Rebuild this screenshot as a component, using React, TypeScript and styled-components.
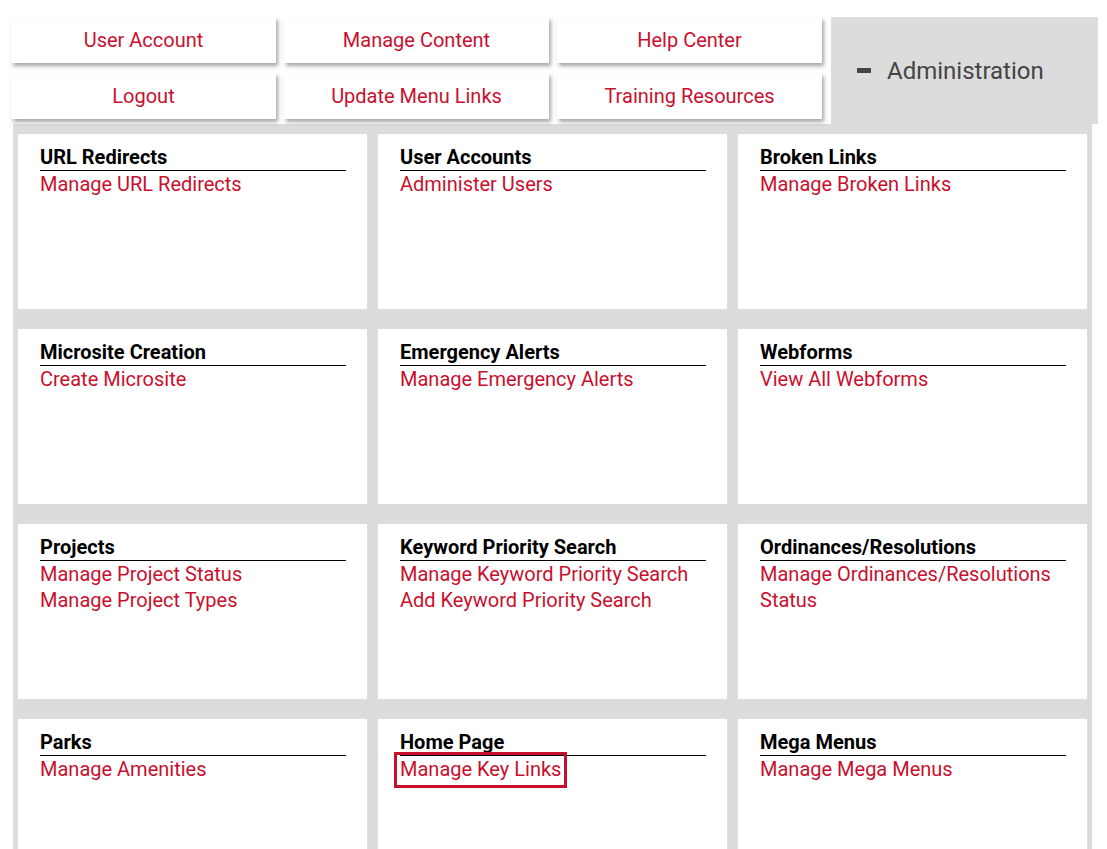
import * as React from "react";
import styled, { createGlobalStyle } from "styled-components";

interface ILinkItem {
  label: string;
  highlight?: boolean;
}

interface ISection {
  title: string;
  links: ILinkItem[];
}

const RED = "#c8102e";
const GREY = "#dcdcdc";

const topButtons = [
  "User Account",
  "Manage Content",
  "Help Center",
  "Logout",
  "Update Menu Links",
  "Training Resources"
];

const sections: ISection[] = [
  { title: "URL Redirects", links: [{ label: "Manage URL Redirects" }] },
  { title: "User Accounts", links: [{ label: "Administer Users" }] },
  { title: "Broken Links", links: [{ label: "Manage Broken Links" }] },
  { title: "Microsite Creation", links: [{ label: "Create Microsite" }] },
  { title: "Emergency Alerts", links: [{ label: "Manage Emergency Alerts" }] },
  { title: "Webforms", links: [{ label: "View All Webforms" }] },
  {
    title: "Projects",
    links: [{ label: "Manage Project Status" }, { label: "Manage Project Types" }]
  },
  {
    title: "Keyword Priority Search",
    links: [
      { label: "Manage Keyword Priority Search" },
      { label: "Add Keyword Priority Search" }
    ]
  },
  {
    title: "Ordinances/Resolutions",
    links: [{ label: "Manage Ordinances/Resolutions Status" }]
  },
  { title: "Parks", links: [{ label: "Manage Amenities" }] },
  {
    title: "Home Page",
    links: [{ label: "Manage Key Links", highlight: true }]
  },
  { title: "Mega Menus", links: [{ label: "Manage Mega Menus" }] }
];

const GlobalStyle = createGlobalStyle`
  body {
    margin: 0;
    background: #fff;
    font-family: Roboto, "Liberation Sans", Arial, sans-serif;
  }
`;

const Page = styled.div`
  padding: 17px 0 0 11px;
`;

const TopRow = styled.div`
  display: flex;
  align-items: flex-start;
  height: 107px;
`;

const ButtonGrid = styled.div`
  display: grid;
  grid-template-columns: repeat(3, 265px);
  grid-auto-rows: 46px;
  column-gap: 8px;
  row-gap: 10px;
`;

const MenuButton = styled.a`
  display: flex;
  align-items: center;
  justify-content: center;
  background: #fff;
  color: ${RED};
  font-size: 20px;
  text-decoration: none;
  box-shadow: 2px 3px 4px rgba(0, 0, 0, 0.35);
  cursor: pointer;
`;

const AdminTab = styled.div`
  display: flex;
  align-items: center;
  gap: 16px;
  margin-left: 9px;
  width: 267px;
  height: 107px;
  padding-left: 26px;
  box-sizing: border-box;
  background: ${GREY};
  color: #444;
  font-size: 24px;
`;

const Panel = styled.div`
  display: grid;
  grid-template-columns: repeat(3, 349px);
  grid-auto-rows: 175px;
  column-gap: 11px;
  row-gap: 20px;
  width: 1079px;
  box-sizing: border-box;
  margin-left: 2px;
  padding: 10px 5px 0;
  background: ${GREY};
`;

const Card = styled.div`
  background: #fff;
  padding: 12px 21px 0 22px;
`;

const CardTitle = styled.h2`
  margin: 0;
  padding-bottom: 1px;
  border-bottom: 1px solid #000;
  color: #000;
  font-size: 20px;
  font-weight: 700;
  line-height: 23px;
`;

const LinkList = styled.div`
  display: flex;
  flex-direction: column;
  align-items: flex-start;
`;

const CardLink = styled.a<{ $highlight?: boolean }>`
  display: inline-block;
  color: ${RED};
  font-size: 20px;
  line-height: 26px;
  text-decoration: none;
  cursor: pointer;
  ${(p) =>
    p.$highlight &&
    `
    margin: -1px 0 -3px -3px;
    padding: 1px 3px 3px 3px;
    outline: 3px solid ${RED};
  `}
`;

const MinusIcon = () => (
  <svg width="14" height="5" viewBox="0 0 14 5">
    <rect x="0" y="0" width="14" height="5" fill="#444" />
  </svg>
);

export default function App() {
  return (
    <Page>
      <GlobalStyle />
      <TopRow>
        <ButtonGrid>
          {topButtons.map((label) => (
            <MenuButton key={label}>{label}</MenuButton>
          ))}
        </ButtonGrid>
        <AdminTab>
          <MinusIcon />
          <span>Administration</span>
        </AdminTab>
      </TopRow>
      <Panel>
        {sections.map((section) => (
          <Card key={section.title}>
            <CardTitle>{section.title}</CardTitle>
            <LinkList>
              {section.links.map((link) => (
                <CardLink key={link.label} $highlight={link.highlight}>
                  {link.label}
                </CardLink>
              ))}
            </LinkList>
          </Card>
        ))}
      </Panel>
    </Page>
  );
}
